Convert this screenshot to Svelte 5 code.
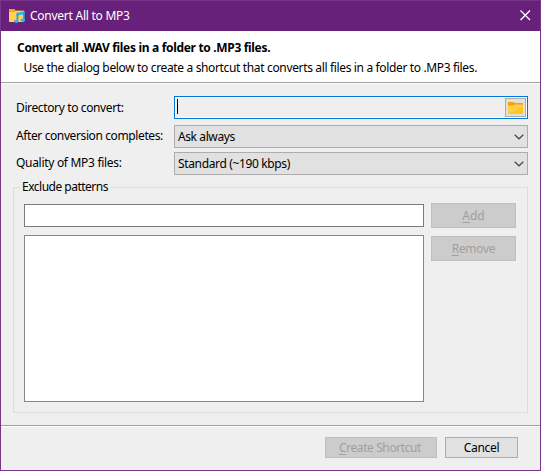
<script>
  let directory = $state('');
  let pattern = $state('');
  const rows = [
    { label: 'After conversion completes:', value: 'Ask always', ls: [-0.39, -0.4] },
    { label: 'Quality of MP3 files:', value: 'Standard (~190 kbps)', ls: [-0.3, -0.36] }
  ];
</script>

<div class="window">
  <header class="titlebar">
    <svg class="logo" width="18" height="16" viewBox="0 0 18 16">
      <path d="M1 1h5.5l1 1.5H16V14H1z" fill="#f0a81c" />
      <path d="M1 4h5.5L8 3h8v11H1z" fill="#ffd24f" />
      <path d="M8.6 4.8 16.8 3.3v2.9L8.6 7.7z" fill="#38b6f1" />
      <path d="M8.6 5h1.7v8.4H8.6zM15.2 3.8h1.6v8.4h-1.6z" fill="#1e9be0" />
      <ellipse cx="8.3" cy="13.2" rx="2.1" ry="1.8" fill="#35b4f0" />
      <ellipse cx="14.8" cy="12.2" rx="2.1" ry="1.8" fill="#35b4f0" />
    </svg>
    <span class="title">Convert All to MP3</span>
    <svg class="close" width="11" height="11" viewBox="0 0 11 11"><path d="M.5.5l9.5 9.5M10 .5L.5 10" stroke="#fff" stroke-width="1.3" /></svg>
  </header>

  <section class="banner">
    <h1><span>Convert all .WAV files in a folder to .MP3 files.</span></h1>
    <p><span>Use the dialog below to create a shortcut that converts all files in a folder to .MP3 files.</span></p>
  </section>

  <main>
    <div class="row first">
      <span class="label" style:letter-spacing="-0.37px">Directory to convert:</span>
      <div class="path">
        <span class="caret">{directory}</span>
        <button class="browse" aria-label="Browse">
          <svg width="15" height="12" viewBox="0 0 15 12">
            <path d="M0 0h5.5l1 1H15v3H0z" fill="#f9a208" />
            <path d="M0 3.5h5L6.5 2.5H15V12H0z" fill="#ffd043" />
            <path d="M0 12 15 5v7z" fill="#ffc61f" />
          </svg>
        </button>
      </div>
    </div>
    {#each rows as row}
      <div class="row">
        <span class="label" style:letter-spacing="{row.ls[0]}px">{row.label}</span>
        <div class="select">
          <span style:letter-spacing="{row.ls[1]}px">{row.value}</span>
          <svg width="10" height="6" viewBox="0 0 10 6"><path d="M.7.7 5 4.8 9.3.7" fill="none" stroke="#484848" stroke-width="1.2" /></svg>
        </div>
      </div>
    {/each}

    <section class="group">
      <h2>Exclude patterns</h2>
      <div class="fields">
        <input bind:value={pattern} aria-label="Pattern" />
        <div class="list"></div>
      </div>
      <div class="actions">
        <button class="off"><span class="add"><u>A</u>dd</span></button>
        <button class="off"><span class="remove"><u>R</u>emove</span></button>
      </div>
    </section>
  </main>

  <footer>
    <button class="off create"><span><u>C</u>reate Shortcut</span></button>
    <button class="cancel"><span>Cancel</span></button>
  </footer>
</div>

<style>
  .window {
    box-sizing: border-box;
    width: 541px;
    height: 471px;
    border: 1px solid #78358a;
    background: #efefef;
    color: #000;
    font: 12px/16px "Noto Sans", "Open Sans", sans-serif;
    display: flex;
    flex-direction: column;
    white-space: nowrap;
  }
  * { box-sizing: border-box; }
  .titlebar {
    height: 30px;
    flex: none;
    background: #68217a;
    display: flex;
    align-items: center;
    padding: 0 9px 0 7px;
    color: #fff;
  }
  .logo { flex: none; margin-top: -1px; }
  .title { margin-left: 4px; letter-spacing: -0.25px; }
  .close { margin-left: auto; margin-top: -1px; }
  .banner {
    height: 53px;
    flex: none;
    background: #fff;
    border-bottom: 1px solid #fff;
    box-shadow: inset 0 -1px #a0a0a0;
    padding: 9px 0 0 16px;
  }
  h1 { margin: 0; font-size: 12px; line-height: 16px; font-weight: 700; letter-spacing: -0.32px; }
  p { margin: 4px 0 0 6.5px; letter-spacing: -0.35px; }
  main { height: 341px; flex: none; padding: 12px 12px 0; }
  .row { display: flex; height: 23px; margin-bottom: 4px; padding-left: 3px; }
  .row.first { margin-bottom: 6px; }
  .label { width: 158px; flex: none; padding-top: 3px; }
  .first .label { padding-top: 4px; }
  .path {
    flex: 1;
    border: 1px solid #0078d7;
    display: flex;
    justify-content: space-between;
    padding: 1px;
    box-shadow: inset 0 0 0 1px #fff;
  }
  .caret { width: 1px; height: 15px; margin: 1px 0 0 1px; background: #000; }
  button {
    font: inherit;
    padding: 0;
    border: 1px solid #adadad;
    background: #e1e1e1;
    color: #000;
    display: flex;
    align-items: center;
    justify-content: center;
  }
  .browse { width: 21px; height: 19px; }
  .select {
    flex: 1;
    height: 23px;
    border: 1px solid #adadad;
    background: #e1e1e1;
    display: flex;
    align-items: center;
    justify-content: space-between;
    padding: 0 3px;
  }
  .group {
    height: 226px;
    margin-top: 12px;
    border: 1px solid #dcdcdc;
    display: flex;
    padding: 0 11px 0 10px;
    gap: 7px;
    flex-wrap: wrap;
    align-content: flex-start;
    row-gap: 0;
  }
  h2 {
    width: 90px;
    height: 15px;
    margin: -9px 380px 0 -4px;
    padding-left: 2px;
    background: #efefef;
    font-weight: 400;
    font-size: 12px;
    line-height: 16px;
    letter-spacing: -0.5px;
  }
  .fields { width: 400px; padding-top: 10px; }
  .fields input { display: block; width: 400px; height: 23px; border: 1px solid #7a7a7a; background: #fff; outline: 0; padding: 0 3px; }
  .list { height: 167px; margin-top: 8px; border: 1px solid #828790; background: #fff; }
  .actions { padding-top: 9px; display: flex; flex-direction: column; gap: 8px; }
  .actions button { width: 85px; height: 25px; }
  .off { border-color: #bfbfbf; background: #ccc; color: #a0a0a0; }
  u { text-decoration-thickness: 1px; text-underline-offset: 2px; }
  .remove, .cancel span { letter-spacing: -0.3px; }
  .create span { letter-spacing: -0.4px; margin-right: 2px; }
  footer {
    flex: 1;
    border-top: 1px solid #a0a0a0;
    box-shadow: inset 0 1px #fff;
    display: flex;
    justify-content: flex-end;
    gap: 8px;
    padding: 11px 22px 0 0;
  }
  footer button { height: 21px; }
  .create { width: 112px; }
  .cancel { width: 73px; }
</style>
